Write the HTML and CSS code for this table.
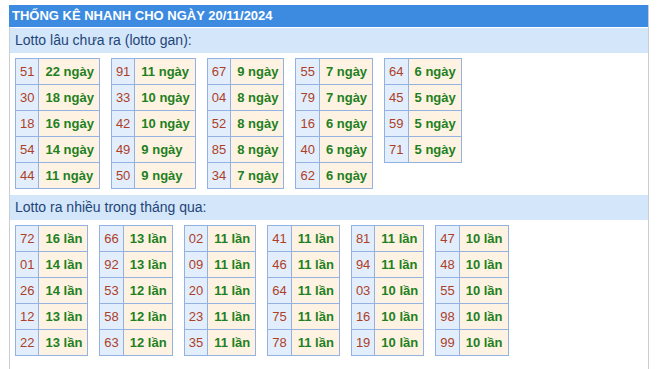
FILE: index.html
```html
<!DOCTYPE html>
<html lang="vi">
<head>
<meta charset="utf-8">
<link rel="stylesheet" href="styles.css">
</head>
<body>
<div class="box">
  <div class="title">THỐNG KÊ NHANH CHO NGÀY 20/11/2024</div>
  <div class="sub">Lotto lâu chưa ra (lotto gan):</div>
  <div class="tables">
    <table><tr><td class="n">51</td><td class="v">22 ngày</td></tr><tr><td class="n">30</td><td class="v">18 ngày</td></tr><tr><td class="n">18</td><td class="v">16 ngày</td></tr><tr><td class="n">54</td><td class="v">14 ngày</td></tr><tr><td class="n">44</td><td class="v">11 ngày</td></tr></table>
    <table><tr><td class="n">91</td><td class="v">11 ngày</td></tr><tr><td class="n">33</td><td class="v">10 ngày</td></tr><tr><td class="n">42</td><td class="v">10 ngày</td></tr><tr><td class="n">49</td><td class="v">9 ngày</td></tr><tr><td class="n">50</td><td class="v">9 ngày</td></tr></table>
    <table><tr><td class="n">67</td><td class="v">9 ngày</td></tr><tr><td class="n">04</td><td class="v">8 ngày</td></tr><tr><td class="n">52</td><td class="v">8 ngày</td></tr><tr><td class="n">85</td><td class="v">8 ngày</td></tr><tr><td class="n">34</td><td class="v">7 ngày</td></tr></table>
    <table><tr><td class="n">55</td><td class="v">7 ngày</td></tr><tr><td class="n">79</td><td class="v">7 ngày</td></tr><tr><td class="n">16</td><td class="v">6 ngày</td></tr><tr><td class="n">40</td><td class="v">6 ngày</td></tr><tr><td class="n">62</td><td class="v">6 ngày</td></tr></table>
    <table><tr><td class="n">64</td><td class="v">6 ngày</td></tr><tr><td class="n">45</td><td class="v">5 ngày</td></tr><tr><td class="n">59</td><td class="v">5 ngày</td></tr><tr><td class="n">71</td><td class="v">5 ngày</td></tr></table>
  </div>
  <div class="sub">Lotto ra nhiều trong tháng qua:</div>
  <div class="tables">
    <table><tr><td class="n">72</td><td class="v">16 lần</td></tr><tr><td class="n">01</td><td class="v">14 lần</td></tr><tr><td class="n">26</td><td class="v">14 lần</td></tr><tr><td class="n">12</td><td class="v">13 lần</td></tr><tr><td class="n">22</td><td class="v">13 lần</td></tr></table>
    <table><tr><td class="n">66</td><td class="v">13 lần</td></tr><tr><td class="n">92</td><td class="v">13 lần</td></tr><tr><td class="n">53</td><td class="v">12 lần</td></tr><tr><td class="n">58</td><td class="v">12 lần</td></tr><tr><td class="n">63</td><td class="v">12 lần</td></tr></table>
    <table><tr><td class="n">02</td><td class="v">11 lần</td></tr><tr><td class="n">09</td><td class="v">11 lần</td></tr><tr><td class="n">20</td><td class="v">11 lần</td></tr><tr><td class="n">23</td><td class="v">11 lần</td></tr><tr><td class="n">35</td><td class="v">11 lần</td></tr></table>
    <table><tr><td class="n">41</td><td class="v">11 lần</td></tr><tr><td class="n">46</td><td class="v">11 lần</td></tr><tr><td class="n">64</td><td class="v">11 lần</td></tr><tr><td class="n">75</td><td class="v">11 lần</td></tr><tr><td class="n">78</td><td class="v">11 lần</td></tr></table>
    <table><tr><td class="n">81</td><td class="v">11 lần</td></tr><tr><td class="n">94</td><td class="v">11 lần</td></tr><tr><td class="n">03</td><td class="v">10 lần</td></tr><tr><td class="n">16</td><td class="v">10 lần</td></tr><tr><td class="n">19</td><td class="v">10 lần</td></tr></table>
    <table><tr><td class="n">47</td><td class="v">10 lần</td></tr><tr><td class="n">48</td><td class="v">10 lần</td></tr><tr><td class="n">55</td><td class="v">10 lần</td></tr><tr><td class="n">98</td><td class="v">10 lần</td></tr><tr><td class="n">99</td><td class="v">10 lần</td></tr></table>
  </div>
</div>
</body>
</html>
```
FILE: styles.css
```css
html, body {
  margin: 0;
  padding: 0;
  background: #ffffff;
  font-family: "Liberation Sans", Arial, sans-serif;
}
.box {
  margin: 5px 10px 0 9px;
  width: 640px;
  height: 380px;
  box-sizing: border-box;
  border-left: 1px solid #c9cdd6;
  border-right: 1px solid #c9cdd6;
}
.title {
  height: 22px;
  line-height: 22px;
  background: #3d8be0;
  color: #ffffff;
  font-weight: bold;
  font-size: 13px;
  padding-left: 3px;
  margin-left: -1px;
}
.sub {
  margin-top: 1px;
  height: 25px;
  line-height: 25px;
  background: #d4e6fa;
  color: #1f4578;
  font-size: 14px;
  padding-left: 5px;
}
.tables {
  display: flex;
  align-items: flex-start;
  gap: 11px;
  padding: 5px 0 5px 5px;
}
table {
  border-collapse: collapse;
  font-size: 13px;
}
td {
  border: 1px solid #93b2e2;
  height: 26px;
  padding: 0 5px 0 6px;
  box-sizing: border-box;
  white-space: nowrap;
}
td.n {
  background: #e2eefc;
  color: #ad3f28;
  text-align: center;
  padding: 0 4px;
}
td.v {
  background: #fef3e2;
  color: #1e801e;
  font-weight: bold;
}
```
